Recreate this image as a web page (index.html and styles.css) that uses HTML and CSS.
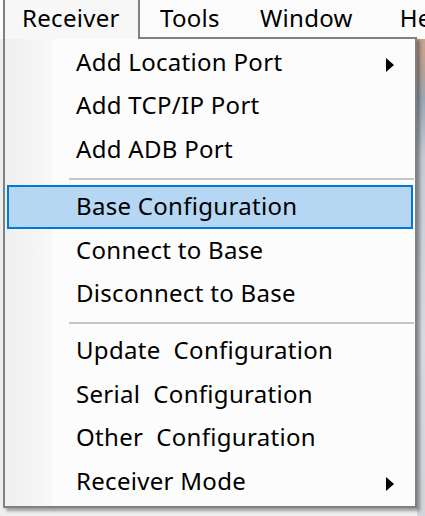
FILE: index.html
```html
<!DOCTYPE html>
<html>
<head>
<meta charset="utf-8">
<link rel="stylesheet" href="styles.css">
</head>
<body>
<div class="screen">
  <div class="menubar">
    <div class="top active">Receiver</div>
    <div class="top tools">Tools</div>
    <div class="top window">Window</div>
    <div class="top help">Help</div>
  </div>
  <div class="content">
    <div class="left-strip"></div>
    <div class="right-strip"></div>
  </div>
  <div class="dropdown">
    <div class="item"><span>Add Location Port</span><svg class="arrow" width="8" height="14" viewBox="0 0 8 14"><polygon points="0,0 8,7 0,14" fill="#000"/></svg></div>
    <div class="item"><span>Add TCP/IP Port</span></div>
    <div class="item"><span>Add ADB Port</span></div>
    <div class="sep"></div>
    <div class="item selected"><span>Base Configuration</span></div>
    <div class="item"><span>Connect to Base</span></div>
    <div class="item"><span>Disconnect to Base</span></div>
    <div class="sep"></div>
    <div class="item"><span>Update&nbsp; Configuration</span></div>
    <div class="item"><span>Serial&nbsp; Configuration</span></div>
    <div class="item"><span>Other&nbsp; Configuration</span></div>
    <div class="item"><span>Receiver Mode</span><svg class="arrow" width="8" height="14" viewBox="0 0 8 14"><polygon points="0,0 8,7 0,14" fill="#000"/></svg></div>
  </div>
</div>
</body>
</html>
```

FILE: styles.css
```css
html, body {
  margin: 0;
  padding: 0;
}
body {
  width: 425px;
  height: 516px;
  overflow: hidden;
  background: #f0f0f0;
  font-family: "Noto Sans", "Open Sans", sans-serif;
  color: #000;
}
.screen {
  position: relative;
  width: 425px;
  height: 516px;
  display: flex;
  flex-direction: column;
  overflow: hidden;
}
.menubar {
  display: flex;
  height: 39px;
  padding-left: 3px;
  background: #fbfbfb;
  font-size: 24px;
  letter-spacing: 0.3px;
  line-height: 36px;
  white-space: nowrap;
  flex: none;
  overflow: hidden;
}
.top {
  flex: none;
}
.top.active {
  position: relative;
  z-index: 2;
  box-sizing: border-box;
  width: 137px;
  height: 39px;
  padding-left: 17px;
  border-left: 2px solid #808080;
  border-right: 2px solid #808080;
  background: #f7f7f7;
}
.top.tools {
  margin-left: 20px;
}
.top.window {
  margin-left: 40px;
}
.top.help {
  margin-left: 47px;
}
.content {
  flex: 1;
  display: flex;
  justify-content: space-between;
}
.left-strip {
  width: 3px;
  background: #eeeeee;
}
.right-strip {
  width: 8px;
  background: linear-gradient(to bottom, #c9a48e 0, #b7a196 30px, #9aa7b6 60px, #c5ccd6 120px, #d8dbe0 300px, #cfd2d6 516px);
}
.dropdown {
  position: absolute;
  z-index: 1;
  left: 3px;
  top: 37px;
  width: 414px;
  height: 471px;
  box-sizing: border-box;
  border: 2px solid #808080;
  padding-top: 2px;
  background: linear-gradient(to right, #efefef 0, #f8f8f8 47px, #fcfcfc 48px, #fcfcfc 100%);
  box-shadow: 3px 3px 3px rgba(0, 0, 0, 0.35);
  font-size: 24px;
  letter-spacing: 0.3px;
}
.item {
  position: relative;
  box-sizing: border-box;
  height: 43.6px;
  margin: 0 2px;
  border: 2px solid transparent;
  padding-left: 67px;
  display: flex;
  align-items: center;
  white-space: nowrap;
  line-height: 30px;
}
.item span {
  margin-top: -2px;
}
.item.selected {
  background: #b5d7f3;
  border-color: #0078d7;
}
.arrow {
  position: absolute;
  right: 17px;
  top: 15px;
}
.sep {
  height: 2px;
  margin: 6px 1px 5.4px 64px;
  background: #c6c6c6;
}
```
